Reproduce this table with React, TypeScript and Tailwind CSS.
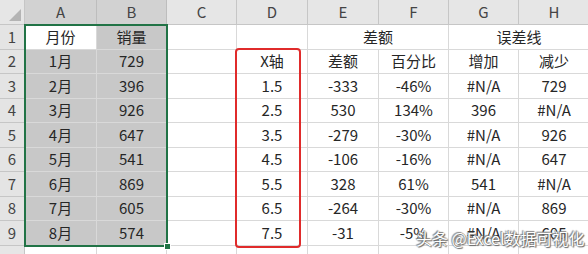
import React from 'react';

const cols = ['A', 'B', 'C', 'D', 'E', 'F', 'G', 'H'];

const rows: string[][] = [
  ['1月', '729', '', 'X轴', '差额', '百分比', '增加', '减少'],
  ['2月', '396', '', '1.5', '-333', '-46%', '#N/A', '729'],
  ['3月', '926', '', '2.5', '530', '134%', '396', '#N/A'],
  ['4月', '647', '', '3.5', '-279', '-30%', '#N/A', '926'],
  ['5月', '541', '', '4.5', '-106', '-16%', '#N/A', '647'],
  ['6月', '869', '', '5.5', '328', '61%', '541', '#N/A'],
  ['7月', '605', '', '6.5', '-264', '-30%', '#N/A', '869'],
  ['8月', '574', '', '7.5', '-31', '-5%', '#N/A', '605'],
];

const cell = 'flex items-center justify-center border-r border-b border-[#d9d9d9] text-[15px] text-[#262626]';

export default function App() {
  return (
    <div
      className="relative w-[588px] h-[254px] overflow-hidden bg-white"
      style={{ fontFamily: '"Noto Sans CJK SC", "Noto Sans", sans-serif' }}
    >
      <div className="grid grid-cols-[25px_72px_70px_70px_71px_71px_70px_70px_71px] grid-rows-[25px_25px_24px_25px_24px_25px_24px_25px_24px_25px_24px]">
        {/* column headers */}
        <div className="relative bg-[#e6e6e6] border-r border-b border-[#c6c6c6]">
          <div className="absolute right-[3px] bottom-[3px] w-0 h-0 border-l-[12px] border-l-transparent border-b-[12px] border-b-[#b4b4b4]" />
        </div>
        {cols.map((c, i) => (
          <div
            key={c}
            className={`flex items-center justify-center border-r border-b text-[15px] text-[#444] ${
              i < 2 ? 'bg-[#d2d2d2] border-r-[#bdbdbd] border-b-[#217346]' : 'bg-[#e6e6e6] border-[#c6c6c6]'
            }`}
          >
            {c}
          </div>
        ))}

        {/* row 1 */}
        <div className="flex items-center justify-center bg-[#e4e4e4] border-r border-b border-[#c6c6c6] text-[15px] text-[#444]">1</div>
        <div className={`${cell} bg-white`}>月份</div>
        <div className={`${cell} bg-[#c8c8c8] border-[#b4b4b4]`}>销量</div>
        <div className={cell} />
        <div className={cell} />
        <div className={`${cell} col-span-2`}>差额</div>
        <div className={`${cell} col-span-2`}>误差线</div>

        {rows.map((r, ri) => (
          <React.Fragment key={ri}>
            <div className="flex items-center justify-center bg-[#e4e4e4] border-r border-b border-[#c6c6c6] text-[15px] text-[#444]">
              {ri + 2}
            </div>
            {r.map((v, ci) => (
              <div key={ci} className={`${cell} ${ci < 2 ? 'bg-[#c8c8c8] border-[#b4b4b4]' : ''}`}>
                {v}
              </div>
            ))}
          </React.Fragment>
        ))}

        {/* row 10, cut off */}
        <div className="flex items-start justify-center bg-[#e6e6e6] border-r border-[#c6c6c6] text-[15px] text-[#444] leading-[22px] pt-[2px]">10</div>
        {cols.map((c) => (
          <div key={c} className="border-r border-[#d9d9d9]" />
        ))}
      </div>

      {/* selection A1:B9 */}
      <div className="absolute left-[24px] top-[24px] w-[144px] h-[223px] border-2 border-[#217346] pointer-events-none" />
      <div className="absolute left-[164px] top-[243px] w-[7px] h-[7px] bg-[#217346] border border-white" />

      {/* red highlight around X axis column */}
      <div className="absolute left-[235px] top-[48px] w-[66px] h-[200px] border-2 border-[#e02b2b] rounded-[4px] pointer-events-none" />

      {/* watermark */}
      <div
        className="absolute left-[416px] top-[227px] text-[16px] leading-[22px] text-white whitespace-nowrap"
        style={{ textShadow: '0 0 1px #555, 1px 1px 1px #666, -1px -1px 1px #888' }}
      >
        头条 @Excel数据可视化
      </div>
    </div>
  );
}
